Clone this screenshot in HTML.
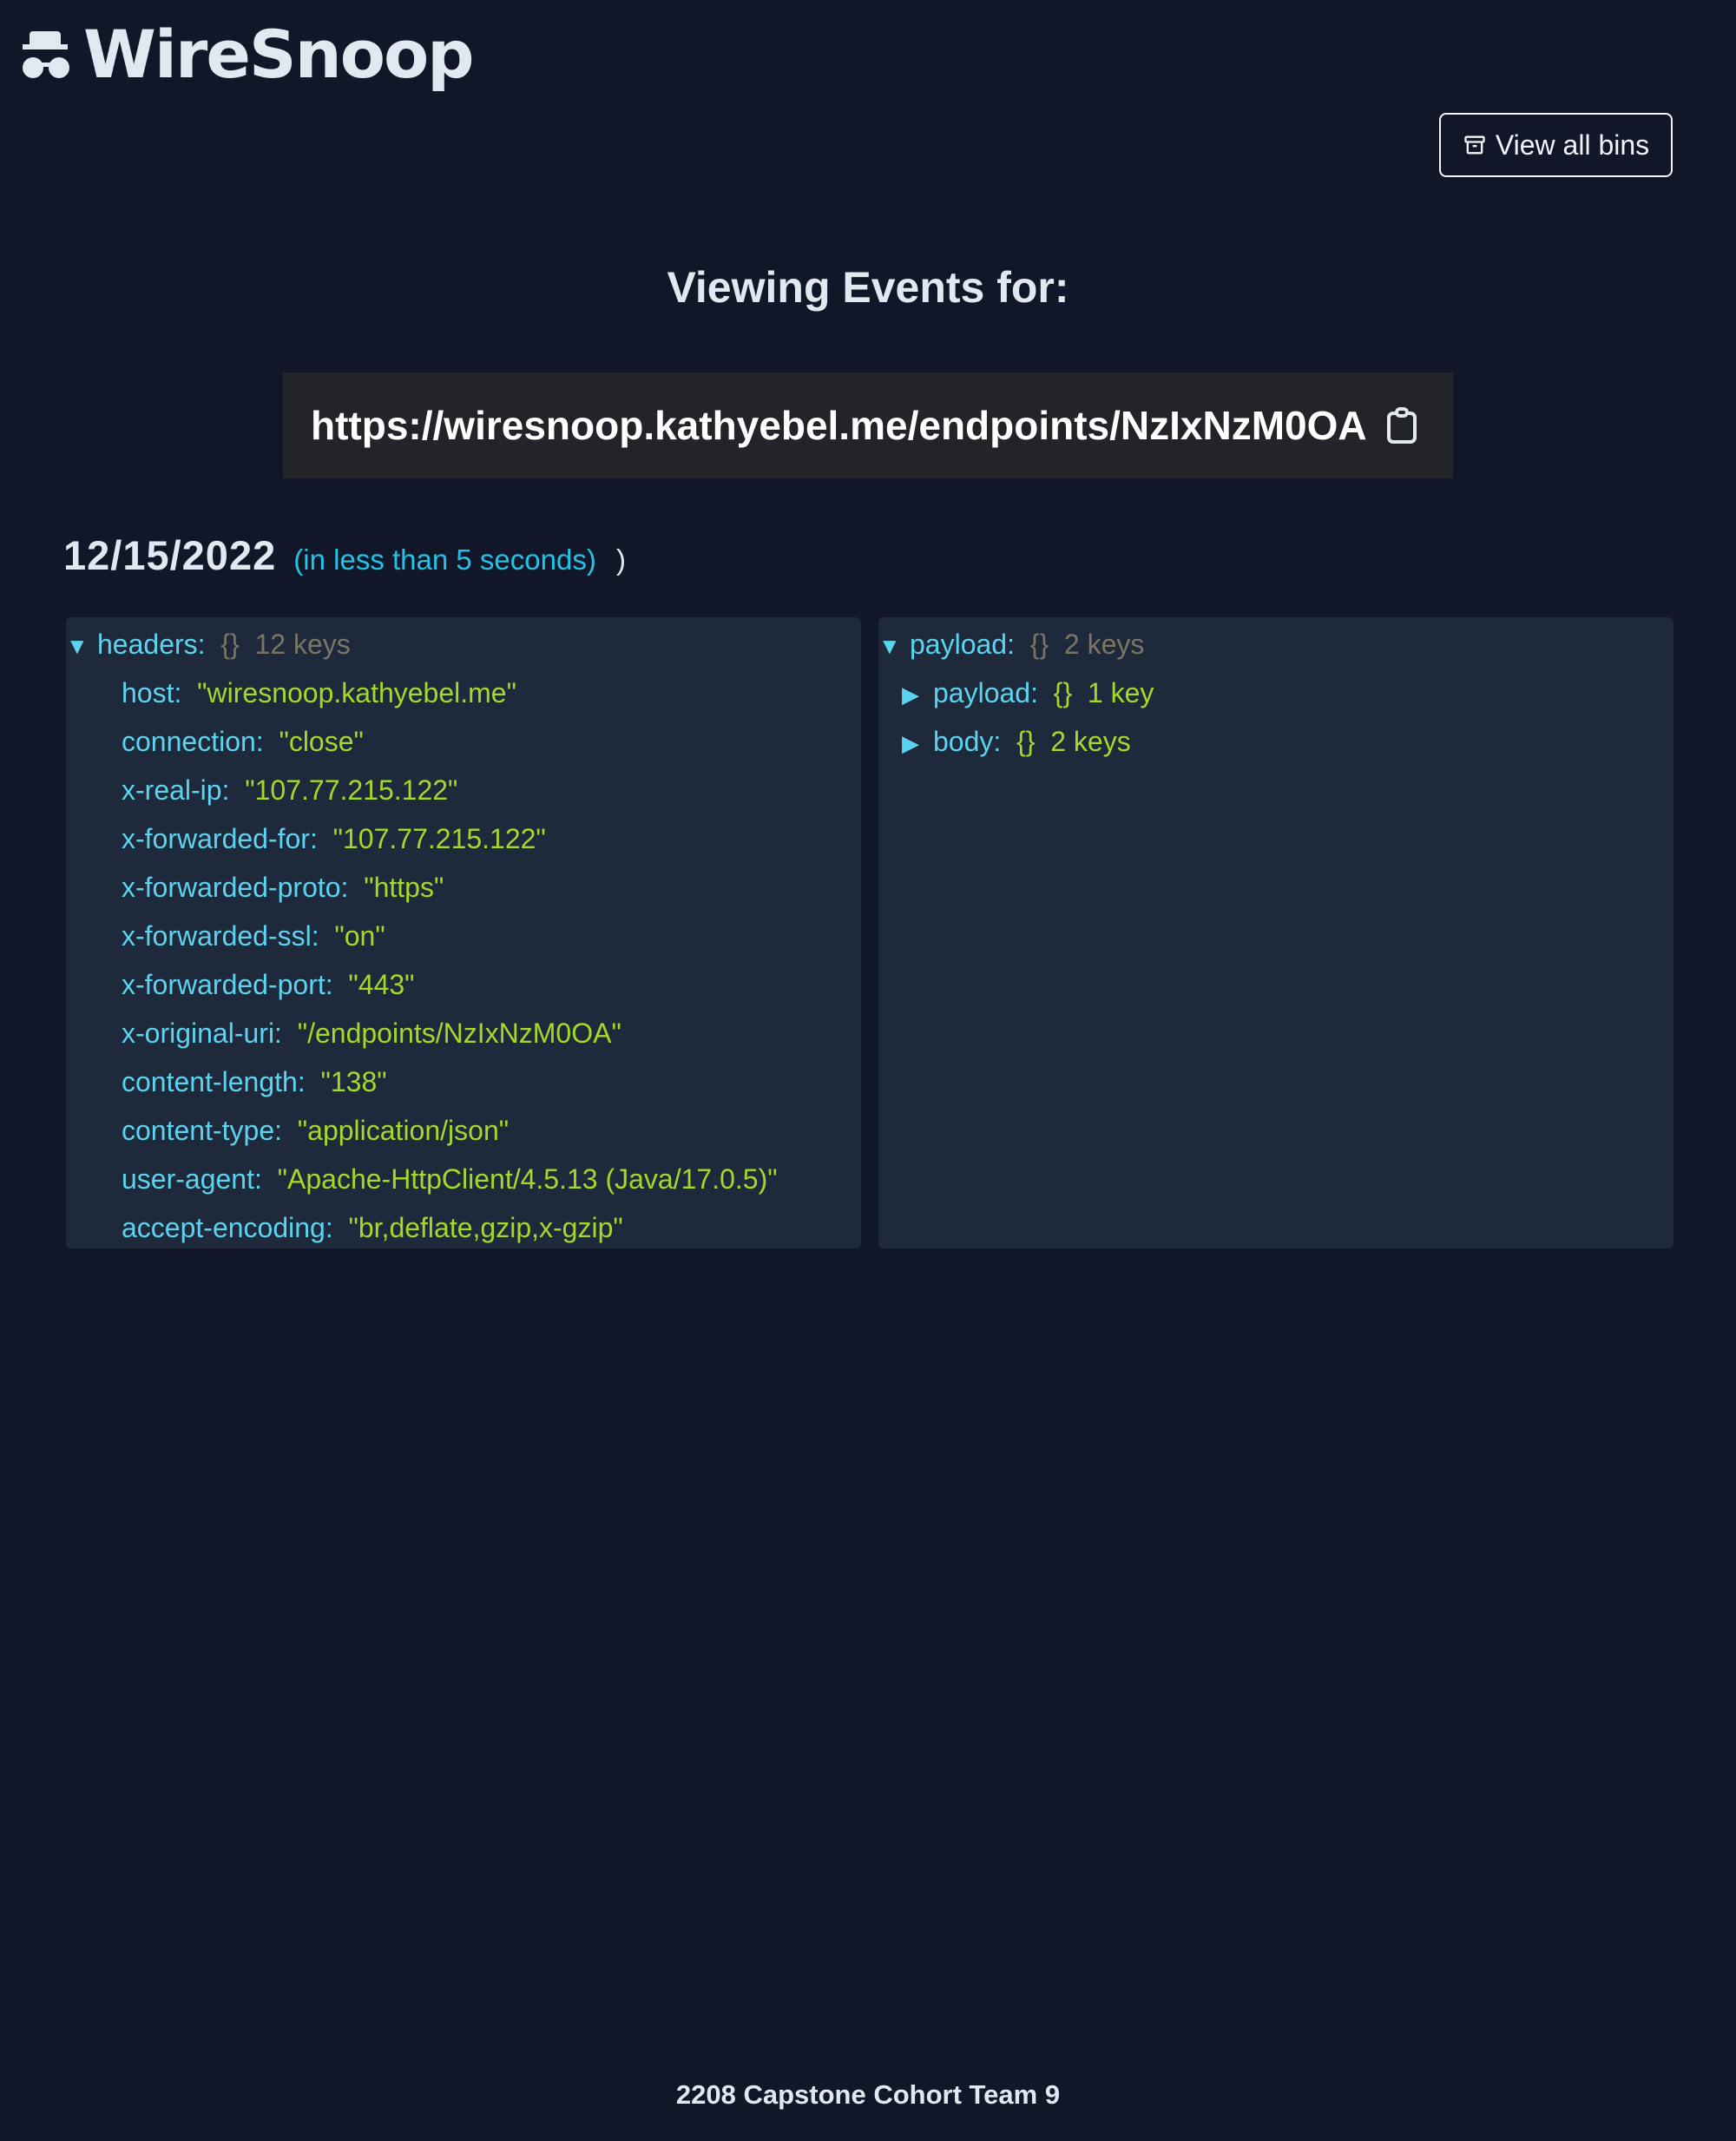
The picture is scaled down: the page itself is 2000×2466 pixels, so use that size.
<!DOCTYPE html>
<html><head><meta charset="utf-8"><style>
*{margin:0;padding:0;box-sizing:border-box}
body{width:2000px;height:2466px;background:#111729;font-family:"Liberation Sans",sans-serif;color:#e2e8f0;position:relative;overflow:hidden}
.abs{position:absolute;white-space:nowrap}
.logo{left:96px;top:18px;font-size:76px;font-weight:900;color:#e2e8f0;letter-spacing:-2px;font-family:"DejaVu Sans","Liberation Sans",sans-serif}
.btn{left:1658px;top:130px;width:269px;height:74px;border:2px solid #f1f5f9;border-radius:8px;font-size:32px;color:#f1f5f9;display:flex;align-items:center;justify-content:center;gap:10px}
.h{left:0;width:2000px;text-align:center;top:302px;font-size:50px;font-weight:bold;color:#e2e8f0}
.url{left:326px;top:429px;width:1348px;height:122px;background:#222429;font-size:46px;font-weight:bold;color:#fff;padding-left:32px;display:flex;align-items:center}
.date{left:73px;top:612px;font-size:47px;font-weight:bold;letter-spacing:1px;color:#e2e8f0}
.date span{font-size:33px;font-weight:normal;letter-spacing:0;color:#22c3e6;margin-left:6px}
.date i{font-style:normal;font-weight:normal;letter-spacing:0;font-size:33px;color:#e2e8f0}
.panel{top:711px;height:727px;width:916px;background:#1e293b;border-radius:6px}
.row{position:absolute;white-space:nowrap;font-size:32px;line-height:56px;color:#5cd3ef}
.s{color:#a3d92a}
.g{color:#7b7565}
.tri{display:inline-block;font-size:26px;color:#5cd3ef;width:36px}
.foot{left:0;width:2000px;text-align:center;top:2395px;font-size:31px;font-weight:bold;color:#e2e8f0}
</style></head><body>
<svg class="abs" style="left:22px;top:34px" width="62" height="60" viewBox="0 0 62 60"><path d="M9 2h30c4 0 5 2 5 5v10h8v6H0v-6h8V7c0-3 1-5 4-5z" fill="#e2e8f0" transform="translate(4,0)"/><circle cx="16" cy="44" r="12" fill="#e2e8f0"/><circle cx="46" cy="44" r="12" fill="#e2e8f0"/><rect x="24" y="38" width="14" height="5" fill="#e2e8f0"/></svg>
<div class="abs logo">WireSnoop</div>
<div class="abs btn"><svg width="28" height="28" viewBox="0 0 24 24" fill="none" stroke="#f1f5f9" stroke-width="2"><rect x="3" y="4" width="18" height="5" rx="1"/><path d="M5 9v10a1 1 0 001 1h12a1 1 0 001-1V9M10 13h4"/></svg>View all bins</div>
<div class="abs h">Viewing Events for:</div>
<div class="abs url">https://wiresnoop.kathyebel.me/endpoints/NzIxNzM0OA<svg style="margin-left:22px" width="36" height="42" viewBox="0 0 36 42" fill="none" stroke="#e2e8f0" stroke-width="4"><rect x="3" y="7" width="30" height="33" rx="5"/><rect x="12" y="2" width="12" height="8" rx="4" fill="#222429"/></svg></div>
<div class="abs date">12/15/2022 <span>(in less than 5 seconds)</span> <i>&nbsp;)</i></div>
<div class="abs panel" style="left:76px">
<div class="row" style="left:0;top:3px"><span class="tri">▼</span>headers:&nbsp; <span class="g">{}&nbsp; 12 keys</span></div>
<div class="row" style="left:64px;top:59px">host:&nbsp; <span class="s">"wiresnoop.kathyebel.me"</span></div>
<div class="row" style="left:64px;top:115px">connection:&nbsp; <span class="s">"close"</span></div>
<div class="row" style="left:64px;top:171px">x-real-ip:&nbsp; <span class="s">"107.77.215.122"</span></div>
<div class="row" style="left:64px;top:227px">x-forwarded-for:&nbsp; <span class="s">"107.77.215.122"</span></div>
<div class="row" style="left:64px;top:283px">x-forwarded-proto:&nbsp; <span class="s">"https"</span></div>
<div class="row" style="left:64px;top:339px">x-forwarded-ssl:&nbsp; <span class="s">"on"</span></div>
<div class="row" style="left:64px;top:395px">x-forwarded-port:&nbsp; <span class="s">"443"</span></div>
<div class="row" style="left:64px;top:451px">x-original-uri:&nbsp; <span class="s">"/endpoints/NzIxNzM0OA"</span></div>
<div class="row" style="left:64px;top:507px">content-length:&nbsp; <span class="s">"138"</span></div>
<div class="row" style="left:64px;top:563px">content-type:&nbsp; <span class="s">"application/json"</span></div>
<div class="row" style="left:64px;top:619px">user-agent:&nbsp; <span class="s">"Apache-HttpClient/4.5.13 (Java/17.0.5)"</span></div>
<div class="row" style="left:64px;top:675px">accept-encoding:&nbsp; <span class="s">"br,deflate,gzip,x-gzip"</span></div>
</div>
<div class="abs panel" style="left:1012px">
<div class="row" style="left:0;top:3px"><span class="tri">▼</span>payload:&nbsp; <span class="g">{}&nbsp; 2 keys</span></div>
<div class="row" style="left:27px;top:59px"><span class="tri">▶</span>payload:&nbsp; <span class="s">{}&nbsp; 1 key</span></div>
<div class="row" style="left:27px;top:115px"><span class="tri">▶</span>body:&nbsp; <span class="s">{}&nbsp; 2 keys</span></div>
</div>
<div class="abs foot">2208 Capstone Cohort Team 9</div>
</body></html>
